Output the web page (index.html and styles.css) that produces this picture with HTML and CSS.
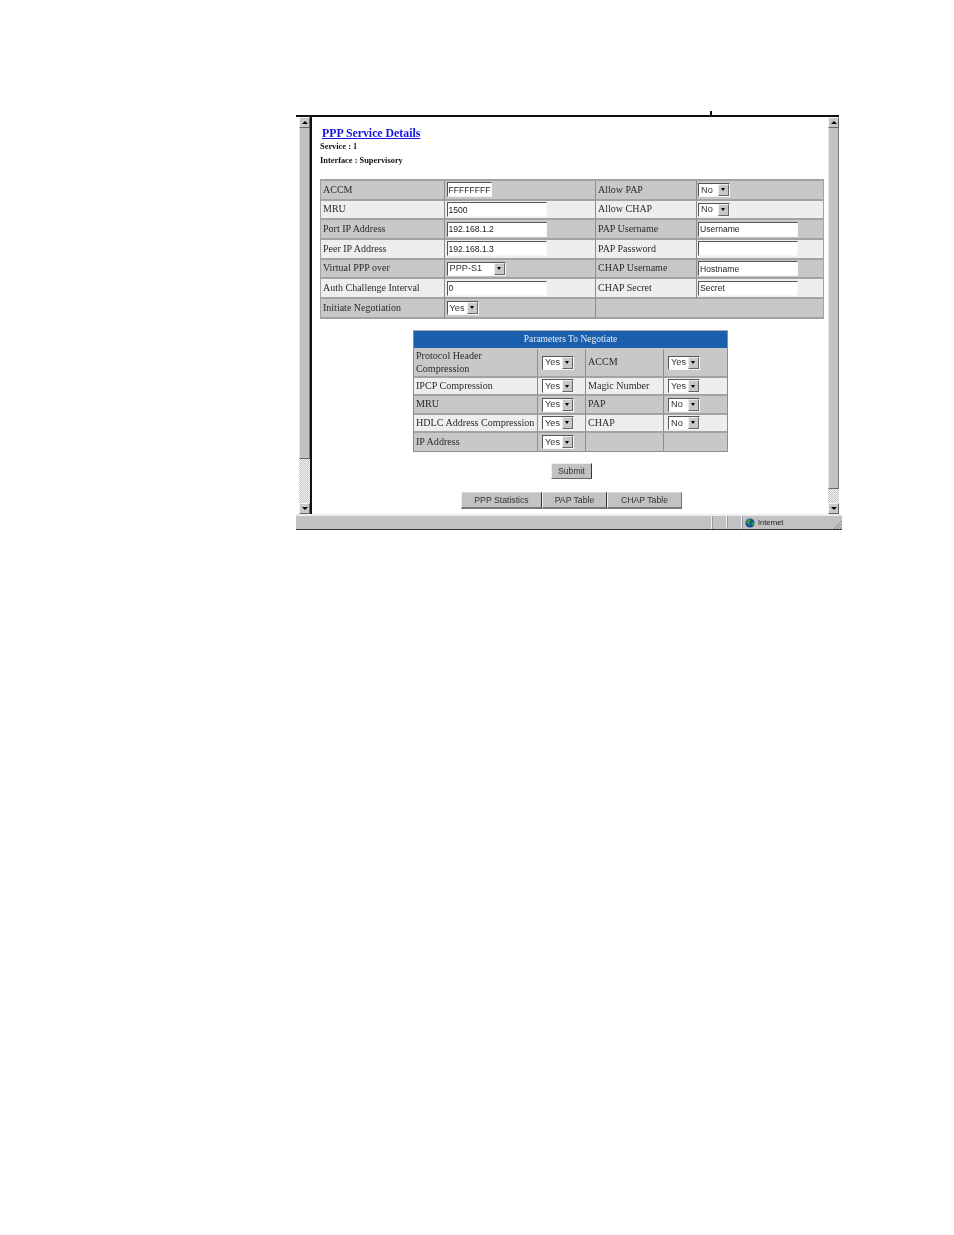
FILE: index.html
```html
<!DOCTYPE html>
<html lang="en">
<head>
    <meta charset="UTF-8">
    <title>PPP Service Details</title>
    <link rel="stylesheet" href="styles.css">
</head>
<body>
    <div class="window">
        <div class="tick"></div>
        <div class="viewport">
            <div class="scrollbar scrollbar-left">
                <div class="scroll-btn"><span class="arrow-up"></span></div>
                <div class="thumb"></div>
                <div class="track"></div>
                <div class="scroll-btn"><span class="arrow-down"></span></div>
            </div>
            <div class="content">
                <a class="page-title" href="#">PPP Service Details</a>
                <div class="info info-service">Service : 1</div>
                <div class="info info-interface">Interface : Supervisory</div>

                <table class="details">
                    <colgroup>
                        <col class="d1"><col class="d2"><col class="d3"><col class="d4">
                    </colgroup>
                    <tr class="dark">
                        <td>ACCM</td>
                        <td><input class="field field-short" value="FFFFFFFF"></td>
                        <td>Allow PAP</td>
                        <td><div class="select select-no"><span>No</span><i class="drop"></i></div></td>
                    </tr>
                    <tr class="light">
                        <td>MRU</td>
                        <td><input class="field" value="1500"></td>
                        <td>Allow CHAP</td>
                        <td><div class="select select-no"><span>No</span><i class="drop"></i></div></td>
                    </tr>
                    <tr class="dark">
                        <td>Port IP Address</td>
                        <td><input class="field" value="192.168.1.2"></td>
                        <td>PAP Username</td>
                        <td><input class="field" value="Username"></td>
                    </tr>
                    <tr class="light">
                        <td>Peer IP Address</td>
                        <td><input class="field" value="192.168.1.3"></td>
                        <td>PAP Password</td>
                        <td><input class="field" value=""></td>
                    </tr>
                    <tr class="dark">
                        <td>Virtual PPP over</td>
                        <td><div class="select select-wide"><span>PPP-S1</span><i class="drop"></i></div></td>
                        <td>CHAP Username</td>
                        <td><input class="field" value="Hostname"></td>
                    </tr>
                    <tr class="light">
                        <td>Auth Challenge Interval</td>
                        <td><input class="field" value="0"></td>
                        <td>CHAP Secret</td>
                        <td><input class="field" value="Secret"></td>
                    </tr>
                    <tr class="dark">
                        <td>Initiate Negotiation</td>
                        <td><div class="select"><span>Yes</span><i class="drop"></i></div></td>
                        <td colspan="2"></td>
                    </tr>
                </table>

                <table class="params">
                    <colgroup>
                        <col class="p1"><col class="p2"><col class="p3"><col class="p4">
                    </colgroup>
                    <tr><th colspan="4">Parameters To Negotiate</th></tr>
                    <tr class="dark tall">
                        <td>Protocol Header<br>Compression</td>
                        <td><div class="select"><span>Yes</span><i class="drop"></i></div></td>
                        <td>ACCM</td>
                        <td><div class="select"><span>Yes</span><i class="drop"></i></div></td>
                    </tr>
                    <tr class="light">
                        <td>IPCP Compression</td>
                        <td><div class="select"><span>Yes</span><i class="drop"></i></div></td>
                        <td>Magic Number</td>
                        <td><div class="select"><span>Yes</span><i class="drop"></i></div></td>
                    </tr>
                    <tr class="dark">
                        <td>MRU</td>
                        <td><div class="select"><span>Yes</span><i class="drop"></i></div></td>
                        <td>PAP</td>
                        <td><div class="select"><span>No</span><i class="drop"></i></div></td>
                    </tr>
                    <tr class="light">
                        <td>HDLC Address Compression</td>
                        <td><div class="select"><span>Yes</span><i class="drop"></i></div></td>
                        <td>CHAP</td>
                        <td><div class="select"><span>No</span><i class="drop"></i></div></td>
                    </tr>
                    <tr class="dark">
                        <td>IP Address</td>
                        <td><div class="select"><span>Yes</span><i class="drop"></i></div></td>
                        <td></td>
                        <td></td>
                    </tr>
                </table>

                <div class="submit-row"><button class="btn">Submit</button></div>
                <div class="tabs">
                    <button class="tab tab-stats">PPP Statistics</button>
                    <button class="tab tab-pap">PAP Table</button>
                    <button class="tab tab-chap">CHAP Table</button>
                </div>
            </div>
            <div class="scrollbar scrollbar-right">
                <div class="scroll-btn"><span class="arrow-up"></span></div>
                <div class="thumb"></div>
                <div class="track"></div>
                <div class="scroll-btn"><span class="arrow-down"></span></div>
            </div>
        </div>
        <div class="statusbar">
            <div class="status-cell status-main"></div>
            <div class="status-cell status-small"></div>
            <div class="status-cell status-small"></div>
            <div class="status-cell status-zone">
                <svg class="globe" width="10" height="10" viewBox="0 0 10 10">
                    <circle cx="5" cy="5" r="4.6" fill="#14489c"/>
                    <path d="M2 1.8 L5 1 L6 2.6 L4.4 4 L5.4 5.6 L4 8 L2.8 6 L1 4.6 Z" fill="#2f9a35"/>
                    <path d="M6.6 4.4 L9 4 L9.2 6.4 L7.4 8 L6.4 6 Z" fill="#2f9a35"/>
                </svg>
                <span>Internet</span>
            </div>
            <svg class="grip" width="9" height="9" viewBox="0 0 9 9">
                <path d="M9 1 L1 9 M9 4 L4 9 M9 7 L7 9" stroke="#8a8a8a" stroke-width="1" fill="none"/>
            </svg>
        </div>
    </div>
</body>
</html>
```

FILE: styles.css
```css
* {
    margin: 0;
    padding: 0;
    box-sizing: border-box;
}

html, body {
    height: 1235px;
    overflow: hidden;
    background: #fff;
}

body {
    padding: 115px 0 0 296px;
    font-family: "Liberation Serif", serif;
    color: #222;
}

/* browser window */
.window {
    position: relative;
    width: 546px;
    height: 415px;
    display: flex;
    flex-direction: column;
    filter: blur(0.35px);
}

.tick {
    position: absolute;
    left: 414px;
    top: -4px;
    width: 1.5px;
    height: 4px;
    background: #111;
}

.viewport {
    flex: 1;
    display: flex;
    width: 543px;
    padding-left: 3px;
    border-top: 2px solid #111;
    min-height: 0;
}

.scrollbar {
    width: 11px;
    display: flex;
    flex-direction: column;
    flex-shrink: 0;
}

.scroll-btn {
    height: 11px;
    background: #c8c8c8;
    border-top: 1px solid #f4f4f4;
    border-left: 1px solid #f4f4f4;
    border-right: 1px solid #666;
    border-bottom: 1px solid #666;
    display: flex;
    align-items: center;
    justify-content: center;
    flex-shrink: 0;
}

.arrow-up {
    border-left: 3px solid transparent;
    border-right: 3px solid transparent;
    border-bottom: 3px solid #000;
}

.arrow-down {
    border-left: 3px solid transparent;
    border-right: 3px solid transparent;
    border-top: 3px solid #000;
}

.thumb {
    background: #c3c1c3;
    border-left: 1px solid #e8e8e8;
    border-right: 1px solid #777;
    border-bottom: 1px solid #666;
}

.scrollbar-left .thumb {
    height: 331px;
}

.scrollbar-right .thumb {
    height: 361px;
}

.track {
    flex: 1;
    background-color: #fff;
    background-image: repeating-conic-gradient(#c8c8c8 0 25%, #f2f2f2 0 50%);
    background-size: 2px 2px;
}

.content {
    flex: 1;
    min-width: 0;
    border-left: 2px solid #111;
    padding: 10px 0 0 8px;
    position: relative;
}

.page-title {
    display: block;
    margin-left: 2px;
    font-size: 11.8px;
    line-height: 13px;
    font-weight: bold;
    color: #1515e0;
}

.info {
    font-size: 8.4px;
    line-height: 11px;
    font-weight: bold;
    color: #111;
}

.info-service {
    margin-top: 1px;
}

.info-interface {
    margin-top: 3px;
}

/* tables */
table {
    border-collapse: separate;
    border-spacing: 0;
    table-layout: fixed;
    font-size: 10px;
    color: #2a2a2a;
}

td {
    padding: 0 0 0 2px;
    vertical-align: middle;
    border-right: 1px solid #8c8c8c;
    border-bottom: 2px solid #a3a3a3;
    line-height: 12.5px;
}

td:last-child {
    border-right: 0;
}

.dark td {
    background: #c8c8c8;
}

.light td {
    background: #eeeeee;
}

.details {
    width: 503px;
    margin-top: 13px;
    border: 1px solid #a3a3a3;
    border-top-width: 2px;
    border-left-width: 1px;
    border-bottom: 0;
}

.details tr {
    height: 19.7px;
}

.d1 { width: 124px; }
.d2 { width: 151px; }
.d3 { width: 100.5px; }
.d4 { width: 126px; }

.params {
    width: 315px;
    margin: 11px 0 0 93px;
    border: 1px solid #8c8c8c;
    border-top-color: #aaa;
    font-size: 10.1px;
}

.params th {
    height: 16px;
    background: #1a5fae;
    color: #e8eef6;
    font-weight: normal;
    font-size: 9.5px;
    border-bottom: 1px solid #c8c8c8;
}

.params tr {
    height: 18.3px;
}

.params tr.tall {
    height: 29px;
}

.params td:last-child {
    border-right: 0;
}

.params tr:last-child td {
    border-bottom: 0;
}

.p1 { width: 124px; }
.p2 { width: 48px; }
.p3 { width: 78px; }
.p4 { width: 63px; }

/* form controls */
.field {
    display: block;
    width: 100px;
    height: 15px;
    padding: 0 0 0 1px;
    font-family: "Liberation Sans", sans-serif;
    font-size: 8.6px;
    color: #222;
    background: #fff;
    border-style: solid;
    border-width: 1.5px 1px 1px 1px;
    border-color: #555 #f6f6f6 #f6f6f6 #555;
    outline: none;
}

.field-short {
    width: 45px;
}

.select {
    display: flex;
    align-items: center;
    justify-content: space-between;
    width: 32px;
    height: 14px;
    padding: 0 0 0 2px;
    background: #fff;
    border-style: solid;
    border-width: 1px;
    border-color: #555 #f6f6f6 #f6f6f6 #555;
    font-family: "Liberation Sans", sans-serif;
    font-size: 9.2px;
    color: #333;
}

.select-wide {
    width: 59px;
}

.drop {
    position: relative;
    flex-shrink: 0;
    width: 11px;
    height: 12px;
    background: #c8c8c8;
    border-top: 1px solid #eee;
    border-left: 1px solid #eee;
    border-right: 1px solid #666;
    border-bottom: 1px solid #666;
}

.drop::after {
    content: "";
    position: absolute;
    left: 2px;
    top: 3.5px;
    border-left: 2.5px solid transparent;
    border-right: 2.5px solid transparent;
    border-top: 3px solid #000;
}

.details td:nth-child(2),
.details td:nth-child(4) {
    padding-left: 1.5px;
}

.params td:nth-child(2),
.params td:nth-child(4) {
    padding-left: 4px;
}

/* buttons */
.btn, .tab {
    font-family: "Liberation Sans", sans-serif;
    font-size: 8.7px;
    color: #333;
    background: #c3c1c3;
    border-style: solid;
    border-color: #efefef #333 #666 #efefef;
}

.submit-row {
    display: flex;
    margin: 11px 0 0 231px;
}

.btn {
    width: 41px;
    height: 16px;
    border-width: 1px;
}

.tabs {
    display: flex;
    margin: 13px 0 0 141px;
}

.tab {
    height: 17px;
    border-width: 1px 1.5px 2px 1px;
    border-top-color: #d8d8d8;
    border-bottom-color: #777;
}

.tab-stats { width: 81px; }
.tab-pap { width: 65px; }
.tab-chap { width: 75px; border-right-color: #777; }

/* status bar */
.statusbar {
    height: 16px;
    flex-shrink: 0;
    display: flex;
    background: #c3c1c3;
    border-top: 2px solid #ececec;
    border-bottom: 1px solid #333;
    position: relative;
}

.status-cell {
    height: 100%;
    border-right: 1px solid #efefef;
    border-left: 1px solid #999;
}

.status-main {
    width: 416px;
    border-left: 0;
}

.status-small {
    width: 15px;
}

.status-zone {
    flex: 1;
    display: flex;
    align-items: center;
    gap: 3px;
    padding-left: 2px;
    border-right: 0;
    font-family: "Liberation Sans", sans-serif;
    font-size: 7.5px;
    color: #222;
}

.grip {
    position: absolute;
    right: 0;
    bottom: 0;
}
```
